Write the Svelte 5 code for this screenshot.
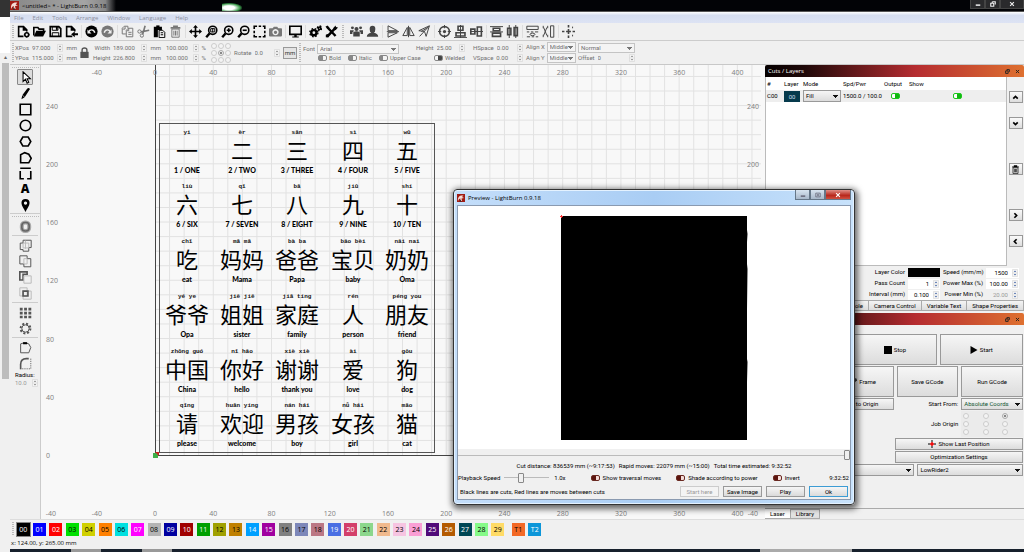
<script lang="ts">
  interface Tool {
    icon: string;
    label: string;
    dim?: boolean;
  }

  const menus = ['File', 'Edit', 'Tools', 'Arrange', 'Window', 'Language', 'Help'];

  // 16x16 glyphs, drawn with currentColor
  const icons: Record<string, string> = {
    newFile: '<path d="M8 14H2V2h6l4 4v2M8 2v4h4" class="s2"/><circle cx="12" cy="12" r="2.4" class="s2"/><path d="M12 8.4v1.4M12 14.2v1.4M8.4 12h1.4M14.2 12h1.4" class="s"/>',
    open: '<path d="M1 13V3h5l1.500 2H13v2.500" class="s2"/><path d="M1 14l3-7h12l-3.500 7z"/>',
    save: '<path d="M1.500 2h10.500l2.500 2.500V14h-13z" class="s2"/><path d="M4 2h7v4.500H4z" class="s"/><path d="M8.500 2h2v4h-2z"/><path d="M4 14V9.500h8V14" class="s"/>',
    importFile: '<path d="M9 14H2V2h6l4 4v2M8 2v4h4" class="s2"/><path d="M16 10v2.500h-4V15l-4.500-3.700L12 8v2z"/>',
    undo: '<circle cx="8" cy="8" r="7.500"/><path d="M4.500 8.500C6 5 11 5 12 9.500" fill="none" stroke="#eee" stroke-width="1.800"/><path d="M3 5.500v5h5z" fill="#eee"/>',
    redo: '<circle cx="8" cy="8" r="7.500"/><path d="M11.500 8.500C10 5 5 5 4 9.500" fill="none" stroke="#eee" stroke-width="1.800"/><path d="M13 5.500v5H8z" fill="#eee"/>',
    copy: '<path d="M6 11H1.500V4L4 1.500h4.500V4M5 2v3H2" class="s"/><path d="M6.500 6.500L9 4h5.500v10.500h-8zM9.500 4v3H7M9 9h4M9 11.500h4" class="s"/>',
    cut: '<circle cx="3" cy="8" r="2" class="s"/><circle cx="6" cy="13" r="2" class="s"/><path d="M5 8.500l10-2M7 11.500L10 1" class="s2"/>',
    paste: '<path d="M1 2h10v4H6v9H1z"/><path d="M4 .500h4v3H4z"/><path d="M7.500 6.500H12L14.500 9v6.500h-7zM9.500 9.500h3M9.500 12h3" class="s"/>',
    trash: '<path d="M2 3.500h12M6 3V1.500h4V3" class="s2"/><path d="M3.500 5h9V15h-9zM6 7v6M8 7v6M10 7v6" class="s"/>',
    move: '<path d="M8 0l3 3.500H9V7h3.500V5L16 8l-3.500 3V9H9v3.500h2L8 16l-3-3.500h2V9H3.500v2L0 8l3.500-3v2H7V3.500H5z"/>',
    zoomFit: '<circle cx="9.500" cy="6.500" r="5" class="s2"/><path d="M7 4.500h5v4H7zM9.500 4v5" class="s"/><path d="M5.500 10.500L1.500 15" class="s3"/>',
    zoomIn: '<circle cx="9.500" cy="6.500" r="5" class="s2"/><path d="M7 6.500h5M9.500 4v5" class="s2"/><path d="M5.500 10.500L1.500 15" class="s3"/>',
    zoomOut: '<circle cx="9.500" cy="6.500" r="5" class="s2"/><path d="M7 6.500h5" class="s2"/><path d="M5.500 10.500L1.500 15" class="s3"/>',
    frame: '<path d="M1.500 5V1.500H5M7 1.500h3M12 1.500h2.500V5M14.500 7v3M14.500 12v2.500H12M10 14.500H7M5 14.500H1.500V12M1.500 10V7" class="s2"/>',
    camera: '<path fill-rule="evenodd" d="M1 4h3.500L6 2h4l1.500 2H15q1 0 1 1v8q0 1-1 1H1q-1 0-1-1V5q0-1 1-1zM8 5a3.800 3.800 0 1 0 .010 0zM8 7a2 2 0 1 1-.010 0z"/>',
    monitor: '<path d="M1 1.500h14v10H1z" class="s2"/><path d="M6.500 12h3v2H12v1.500H4V14h2.500z"/>',
    gears: '<circle cx="6" cy="9.500" r="3.200" class="s3"/><circle cx="6" cy="9.500" r="5" class="gear"/><circle cx="13" cy="4" r="1.600" class="s2"/><circle cx="13" cy="4" r="2.800" class="gear"/>',
    tools: '<path d="M2.500 2.500L13 13.500M3 14L13 3.500" class="s3"/><path d="M.500 2L4 5l1.500-1.500L3 .500zM10 4l3-3.500.500 2L16 3l-3 3.500zM1 12l2-1 2 2-1 2.500-3-.500z"/>',
    people: '<circle cx="8" cy="5" r="2.500"/><circle cx="3" cy="3.500" r="1.800"/><circle cx="13" cy="3.500" r="1.800"/><path d="M4 14V9q4-2.500 8 0v5zM0 11V6.500h4.500V8L3 9v2zM16 11V6.500h-4.500V8L13 9v2z"/>',
    person: '<path d="M8 1q3.500 0 3.500 4T9.500 9.500Q15 10.500 15 14.500H1q0-4 5.500-5Q4.500 9 4.500 5T8 1z"/>',
    mirrorV: '<path d="M2.500 1L14 7H2.500zM2.500 15L14 9.500H2.500z" class="s"/><path d="M1 8.200h15" class="s"/>',
    mirrorH: '<path d="M6.500 3v10H1zM9.500 3v10H15z" class="s"/><path d="M8 1v14" class="s"/>',
    mirrorD: '<path d="M1 7L14 1 10 14M1 7l7 1M14 1L2 14M8 8l2 6M4 8l8-5" class="s"/>',
    target: '<circle cx="8" cy="8" r="6" class="s2"/><circle cx="8" cy="8" r="2"/><path d="M8 0v4M8 12v4M0 8h4M12 8h4" class="s"/>',
    alignV: '<path d="M5 1.500h6v5H5zM2.500 9.500h11v4h-11z" class="s2"/><path d="M8 0v16M0 15.500h16" class="s"/>',
    alignH: '<path d="M1 5h5v6H1zM9 2.500h5v11H9z" class="s2"/><path d="M0 8h16" class="s"/>',
    distV: '<path d="M4 4h8v3H4zM3 10h10v4H3z" class="s2"/><path d="M0 2h16M0 8.500h16" class="s"/>',
    distH: '<path d="M2 4h4v8H2zM10 3h4v10h-4z" class="s2"/><path d="M4 0v16M12 0v16" class="s"/>',
    sameW: '<path d="M1 1.500h14v4H1z" class="s"/><path d="M1 8.500h3M6 8.500h3M11 8.500h4M1 14.500h4M7 14.500h3M12 14.500h3" class="s"/><ellipse cx="8" cy="11.500" rx="3" ry="1.500" class="s"/>',
    sameH: '<path d="M10.500 1h4v14h-4z" class="s"/><path d="M1.500 1v3M1.500 12v3M7 1v3M7 12v3M2 3l4 10M6 3L2 13" class="s"/>',
    center: '<path d="M8 0v3M8 5v6M8 13v3M0 8h3M5 8h6M13 8h3" class="s2"/><path d="M13 2v2M13 12v2" class="s"/>',
    pointer: '<path d="M5 1v12l3-3 2 5 2-1-2-4.500h4z" fill="#fff" stroke="currentColor" stroke-width="1.300"/>',
    pencil: '<path d="M3 15l1-5 6-8q2-1.500 3.500.500L7 12.500zM11 1.500l3 2"/><path d="M4 10l3 2.500" stroke="#fff" stroke-width=".700"/>',
    rect: '<path d="M1.500 1.500h13v13h-13z" class="s2"/>',
    ellipse: '<circle cx="8" cy="8" r="6.500" class="s2"/>',
    hexagon: '<path d="M4.700 2.500h6.600L14.500 8l-3.200 5.500H4.700L1.500 8z" class="s2"/>',
    polygon: '<path d="M2 4.500L7 2l5 2 3 5-3 5.500H2z" class="s2"/>',
    nodes: '<path d="M1.500 1.500h13M1.500 5v9.500H6M14.500 5v9.500H10" class="s2"/>',
    pin: '<path fill-rule="evenodd" d="M8 0a5 5 0 0 1 5 5c0 4-3.500 7-5 11C6.500 12 3 9 3 5a5 5 0 0 1 5-5zM8 3a2 2 0 1 0 .010 0z"/>',
    offset: '<rect x="3.500" y="3" width="9" height="10.500" rx="4" fill="none" stroke="#aaa" stroke-width="5"/><rect x="3.500" y="3" width="9" height="10.500" rx="4" fill="none" stroke="#666" stroke-width="2"/>',
    weld: '<path d="M5 5V1.500h10v9h-3V15H5v-2H1.500V5z" class="s"/><path d="M5 5h7v6H5zM8 2v10" class="ghost"/>',
    union: '<path d="M1 1h9v3.500h4.500v10H6V11H1z" class="s"/><path d="M6 4.500h4V11H6z" class="ghost"/>',
    subtract: '<path d="M1 1h9v3H5v7H1z" class="s2"/><path d="M6 6h9v9H6z" class="ghost"/>',
    intersect: '<path d="M1 1h9v10H1zM5 5h10v10H5z" class="ghost"/><path d="M5 5h6v6H5z" class="s2"/>',
    array: '<path d="M1 2h3.500v3.500H1zM6.300 2h3.500v3.500H6.300zM11.600 2h3.500v3.500h-3.500zM1 7h3.500v3.500H1zM6.300 7h3.500v3.500H6.300zM11.600 7h3.500v3.500h-3.500zM1 12h3.500v3H1zM6.300 12h3.500v3H6.300zM11.600 12h3.500v3h-3.500z"/>',
    circular: '<circle cx="8" cy="8" r="4.500" class="s"/><circle cx="8" cy="8" r="6" fill="none" stroke="currentColor" stroke-width="2.500" stroke-dasharray="2.500 2.200"/>',
    startPoint: '<path d="M2 3.500L7 2l5 1.500L14.500 8 12 14.500H2z" class="s"/><path d="M5 1.500h5v2.500H5z" fill="#000"/>',
    radius: '<path d="M2 15V9q0-7 7-7h3" class="s2"/><path d="M14.500 2v12.500H2" fill="none" stroke="currentColor" stroke-dasharray="1.500 1.200"/>',
    lock: '<path d="M2 7h12v9H2z"/><path d="M4.500 8V4.500q0-3 3.500-3t3.500 3V8" class="s2"/>',
    chevUp: '<path d="M4 10l4-4 4 4" class="s3"/>',
    chevDown: '<path d="M4 6l4 4 4-4" class="s3"/>',
    chevRight: '<path d="M6 4l4 4-4 4" class="s3"/>',
    chevLeft: '<path d="M10 4L6 8l4 4" class="s3"/>',
    stop: '<path d="M0 0h16v16H0z"/>',
    play: '<path d="M1 0l14 8-14 8z"/>',
    cross: '<path d="M0 8h4M12 8h4M8 0v4M8 12v4" class="s2"/><path d="M4 8h8M8 4v8" stroke="#e00" stroke-width="3"/>',
    logo: '<path d="M0 0h16v16H0z" fill="#a01c14"/><path d="M2 14C1 6 5 2 13 3l-3 3 4 2-5 1 1 5H6l1-5-3 1z" fill="#f6dcd6"/><path d="M5 15l2-4 2 4z" fill="#222"/>',
    minimise: '<path d="M2 9h12v4H2z"/>',
    restore: '<path d="M6 2h8v7M6 2v3" class="s3"/><path d="M2 6h8v8H2z" class="s3"/>',
    maximise: '<path d="M2 3h12v10H2zM6 7h4v2H6z" class="s2"/>',
    close: '<path d="M3 3l10 10M13 3L3 13" class="s3"/>'
  };

  const mainTools: Tool[][] = [
    [
      { icon: 'newFile', label: 'New' },
      { icon: 'open', label: 'Open' },
      { icon: 'save', label: 'Save' },
      { icon: 'importFile', label: 'Import' }
    ],
    [
      { icon: 'undo', label: 'Undo' },
      { icon: 'redo', label: 'Redo', dim: true }
    ],
    [
      { icon: 'copy', label: 'Copy', dim: true },
      { icon: 'cut', label: 'Cut', dim: true },
      { icon: 'paste', label: 'Paste' },
      { icon: 'trash', label: 'Delete', dim: true }
    ],
    [
      { icon: 'move', label: 'Pan' },
      { icon: 'zoomFit', label: 'Zoom to page' },
      { icon: 'zoomIn', label: 'Zoom in' },
      { icon: 'zoomOut', label: 'Zoom out' },
      { icon: 'frame', label: 'Frame selection' },
      { icon: 'camera', label: 'Camera', dim: true }
    ],
    [{ icon: 'monitor', label: 'Preview' }],
    [
      { icon: 'gears', label: 'Settings' },
      { icon: 'tools', label: 'Device settings' }
    ]
  ];

  const arrangeTools: Tool[][] = [
    [
      { icon: 'people', label: 'Group' },
      { icon: 'person', label: 'Ungroup' }
    ],
    [
      { icon: 'mirrorV', label: 'Flip vertical' },
      { icon: 'mirrorH', label: 'Flip horizontal' },
      { icon: 'mirrorD', label: 'Mirror across line' }
    ],
    [
      { icon: 'target', label: 'Align centers' },
      { icon: 'alignV', label: 'Align vertical' },
      { icon: 'alignH', label: 'Align horizontal' }
    ],
    [
      { icon: 'distV', label: 'Distribute vertical' },
      { icon: 'distH', label: 'Distribute horizontal' }
    ],
    [
      { icon: 'sameW', label: 'Same width' },
      { icon: 'sameH', label: 'Same height' }
    ],
    [{ icon: 'center', label: 'Move to center' }]
  ];

  const drawTools: Tool[] = [
    { icon: 'pointer', label: 'Select' },
    { icon: 'pencil', label: 'Draw lines' },
    { icon: 'rect', label: 'Rectangle' },
    { icon: 'ellipse', label: 'Ellipse' },
    { icon: 'hexagon', label: 'Polygon' },
    { icon: 'polygon', label: 'Edit nodes' },
    { icon: 'nodes', label: 'Tabs' },
    { icon: 'text', label: 'Text' },
    { icon: 'pin', label: 'Position laser' }
  ];

  const shapeTools: Tool[][] = [
    [{ icon: 'offset', label: 'Offset' }],
    [
      { icon: 'weld', label: 'Weld' },
      { icon: 'union', label: 'Union' },
      { icon: 'subtract', label: 'Subtract' },
      { icon: 'intersect', label: 'Intersect' }
    ],
    [
      { icon: 'array', label: 'Grid array' },
      { icon: 'circular', label: 'Circular array' }
    ],
    [
      { icon: 'startPoint', label: 'Start point' },
      { icon: 'radius', label: 'Radius' }
    ]
  ];

  // Workspace is in millimetres, zoomed to pixels
  const scale = 1.456;
  const originX = 114;
  const originY = 390;
  const gridX = Array.from({ length: 41 }, (_, i) => originX + (i + 1) * 10 * scale);
  const gridY = Array.from({ length: 26 }, (_, i) => originY - (i + 1) * 10 * scale);
  const xTicks = [-40, 0, 40, 80, 120, 160, 200, 240, 280, 320, 360, 400];
  const yTicks = [240, 200, 160, 120, 80, 40, 0];

  const colX = [146, 201, 256, 312, 366];
  const rowY = [69, 123, 178, 233, 288, 342];
  const words = [
    [['yi', '一', '1 / ONE'], ['èr', '二', '2 / TWO'], ['sān', '三', '3 / THREE'], ['sì', '四', '4 / FOUR'], ['wǔ', '五', '5 / FIVE']],
    [['liù', '六', '6 / SIX'], ['qī', '七', '7 / SEVEN'], ['bā', '八', '8 / EIGHT'], ['jiǔ', '九', '9 / NINE'], ['shí', '十', '10 / TEN']],
    [['chī', '吃', 'eat'], ['mā mā', '妈妈', 'Mama'], ['bà ba', '爸爸', 'Papa'], ['bǎo bèi', '宝贝', 'baby'], ['nǎi nai', '奶奶', 'Oma']],
    [['yé ye', '爷爷', 'Opa'], ['jiě jiě', '姐姐', 'sister'], ['jiā tíng', '家庭', 'family'], ['rén', '人', 'person'], ['péng you', '朋友', 'friend']],
    [['zhōng guó', '中国', 'China'], ['nǐ hǎo', '你好', 'hello'], ['xiè xiè', '谢谢', 'thank you'], ['ài', '爱', 'love'], ['gǒu', '狗', 'dog']],
    [['qǐng', '请', 'please'], ['huān yíng', '欢迎', 'welcome'], ['nán hái', '男孩', 'boy'], ['nǚ hái', '女孩', 'girl'], ['māo', '猫', 'cat']]
  ];

  const swatches = [
    ['#000000', '#fff'], ['#0000ff', '#fff'], ['#ff0000', '#fff'], ['#00e000', '#000'], ['#d0d000', '#000'],
    ['#ff8000', '#000'], ['#00e0e0', '#000'], ['#ff00ff', '#fff'], ['#b4b4b4', '#000'], ['#0000a0', '#fff'],
    ['#a00000', '#fff'], ['#00a000', '#fff'], ['#a0a000', '#000'], ['#c08000', '#000'], ['#00a0ff', '#fff'],
    ['#a000a0', '#fff'], ['#808080', '#000'], ['#7d87b9', '#000'], ['#bb7784', '#000'], ['#4a6fe3', '#fff'],
    ['#d33f6a', '#fff'], ['#8cd78c', '#000'], ['#f0b98d', '#000'], ['#f6c4e1', '#000'], ['#fa9ed4', '#000'],
    ['#500a78', '#fff'], ['#b45a00', '#fff'], ['#004754', '#fff'], ['#86fa88', '#000'], ['#ffdb66', '#000']
  ];

  let activeLayer = $state(0);
  let activeTool = $state('pointer');
  let origin = $state(2);
  let speed = $state(35);
  let progress = $state(100);
</script>

{#snippet icon(name: string)}
  <svg class="icon" viewBox="0 0 16 16" aria-hidden="true">{@html icons[name]}</svg>
{/snippet}

{#snippet spin()}
  <svg class="spin" viewBox="0 0 6 8" aria-hidden="true">
    <path d="M.5.5h5v7h-5zM0 4h6" fill="#f4f4f4" stroke="#d4d4d4" stroke-width=".6" />
    <path d="M1.800 3L3 1.500 4.200 3zM1.800 5L3 6.500 4.200 5z" fill="currentColor" />
  </svg>
{/snippet}

{#snippet toolGroups(groups: Tool[][])}
  {#each groups as group, g}
    {#if g > 0}<span class="sep"></span>{/if}
    {#each group as tool}
      <button class="tool" class:dim={tool.dim} aria-label={tool.label}>{@render icon(tool.icon)}</button>
    {/each}
  {/each}
{/snippet}

{#snippet field(label: string, value: string)}
  <label class="field">{#if label}<span>{label}</span>{/if}<input type="text" {value} />{@render spin()}</label>
{/snippet}

<div class="desktop">
  <div class="behind">
    <div class="behind-title"></div>
    <div class="behind-page"></div>
    <div class="behind-arrow">▴</div>
    <div class="behind-thumb"></div>
  </div>

  <div class="app">
    <header class="titlebar">
      <span class="title">{@render icon('logo')}&lt;untitled&gt; * - LightBurn 0.9.18</span>
      <span class="glow"></span>
      <div class="caption">
        <button aria-label="Minimize">{@render icon('minimise')}</button>
        <button aria-label="Restore">{@render icon('restore')}</button>
        <button class="wide" aria-label="Close">{@render icon('close')}</button>
      </div>
    </header>

    <nav class="menubar">
      {#each menus as menu}
        <button>{menu}</button>
      {/each}
    </nav>

    <div class="toolbar">
      <span class="handle"></span>
      {@render toolGroups(mainTools)}
      <span class="handle second"></span>
      <div class="arrange">{@render toolGroups(arrangeTools)}</div>
    </div>

    <div class="props">
      <span class="handle"></span>
      <div class="pair pos">
        {@render field('XPos', '97.000')}<span>mm</span>
        {@render field('YPos', '115.000')}<span>mm</span>
      </div>
      <button class="lock" aria-label="Lock aspect ratio">{@render icon('lock')}</button>
      <div class="pair size">
        {@render field('Width', '189.000')}<span>mm</span>
        {@render field('Height', '226.800')}<span>mm</span>
      </div>
      <div class="pair percent">
        {@render field('', '100.000')}<span>%</span>
        {@render field('', '100.000')}<span>%</span>
      </div>
      <div class="anchor">
        {#each Array(9) as _, i}
          <input type="radio" name="anchor" aria-label="Anchor {i + 1}" checked={i === 4} />
        {/each}
      </div>
      <div class="rotate">{@render field('Rotate', '0.0')}</div>
      <button class="unit">mm</button>
      <span class="handle second"></span>
      <div class="font">
        <label class="fontname">Font <select><option>Arial</option></select></label>
        <div class="checks">
          <label><input type="checkbox" class="toggle" />Bold</label>
          <label><input type="checkbox" class="toggle" />Italic</label>
          <label><input type="checkbox" class="toggle" />Upper Case</label>
        </div>
      </div>
      <div class="stack height">
        {@render field('Height', '25.00')}
        <label class="welded"><input type="checkbox" class="toggle" checked />Welded</label>
      </div>
      <div class="stack space">
        {@render field('HSpace', '0.00')}
        {@render field('VSpace', '0.00')}
      </div>
      <div class="stack align">
        <label>Align X <select><option>Middle</option></select></label>
        <label>Align Y <select><option>Middle</option></select></label>
      </div>
      <div class="stack style">
        <select aria-label="Text style"><option>Normal</option></select>
        {@render field('Offset', '0')}
      </div>
    </div>

    <main class="workspace">
      <aside class="tools">
        <span class="hhandle"></span>
        {#each drawTools as tool}
          <button
            class="tool"
            class:active={activeTool === tool.icon}
            aria-label={tool.label}
            onclick={() => { activeTool = tool.icon; }}
          >
            {#if tool.icon === 'text'}<b>A</b>{:else}{@render icon(tool.icon)}{/if}
          </button>
        {/each}
        <span class="hline full"></span>
        <span class="hhandle"></span>
        {#each shapeTools as group, g}
          {#if g > 0}<span class="hline"></span>{/if}
          {#each group as tool}
            <button class="tool grey" aria-label={tool.label}>{@render icon(tool.icon)}</button>
          {/each}
        {/each}
        <label class="radius">Radius:
          <span><input type="text" value="10.0" />{@render spin()}</span>
        </label>
      </aside>

      <svg class="canvas" role="img" aria-label="Workspace">
        <g class="grid">
          {#each gridX as x}<line x1={x} x2={x} y1="0" y2={originY} />{/each}
          {#each gridY as y}<line x1={originX} x2="720" y1={y} y2={y} />{/each}
        </g>
        <path class="axis" d="M114.500 0V390.500H722" />
        <rect class="page" x="118.500" y="58.500" width="275" height="329" />
        <g class="ticks">
          {#each xTicks as t}
            <text x={originX + t * scale} y="10">{t}</text>
            <text x={originX + t * scale} y="451">{t}</text>
          {/each}
          {#each yTicks as t}
            <text class="left" x="5" y={originY - t * scale + 3}>{t}</text>
            <text x="712" y={originY - t * scale + 3}>{t}</text>
          {/each}
          <text x="10" y="451">-40</text>
          <text x="712" y="451">-40</text>
        </g>
        {#each words as row, r}
          {#each row as [pinyin, hanzi, english], c}
            <text class="pinyin" x={colX[c]} y={rowY[r]}>{pinyin}</text>
            <text class="hanzi" x={colX[c]} y={rowY[r] + 25}>{hanzi}</text>
            <text class="english" x={colX[c]} y={rowY[r] + 39}>{english}</text>
          {/each}
        {/each}
        <rect x="112" y="388" width="5" height="5" fill="#3fae49" />
        <path d="M114 387h4v4z" fill="#c22" />
      </svg>

      <aside class="dock">
        <h2 class="dock-title">Cuts / Layers <span>{@render icon('restore')}{@render icon('close')}</span></h2>
        <div class="layers">
          <div class="list">
            <table>
              <thead>
                <tr><th class="c-num">#</th><th class="c-layer">Layer</th><th class="c-mode">Mode</th><th class="c-spd">Spd/Pwr</th><th class="c-out">Output</th><th>Show</th></tr>
              </thead>
              <tbody>
                <tr>
                  <td>C00</td>
                  <td><span class="chip">00</span></td>
                  <td><select class="raised" aria-label="Mode"><option>Fill</option></select></td>
                  <td>1500.0 / 100.0</td>
                  <td class="mid"><input type="checkbox" class="toggle green" aria-label="Output" checked /></td>
                  <td class="mid"><input type="checkbox" class="toggle green" aria-label="Show" checked /></td>
                </tr>
              </tbody>
            </table>
          </div>
          <div class="order">
            <button aria-label="Move up">{@render icon('chevUp')}</button>
            <button aria-label="Move down">{@render icon('chevDown')}</button>
            <button class="gap" aria-label="Delete layer">{@render icon('trash')}</button>
            <button class="gap" aria-label="Next">{@render icon('chevRight')}</button>
            <button aria-label="Previous">{@render icon('chevLeft')}</button>
          </div>
        </div>

        <div class="params">
          <span>Layer Color</span><button class="color" aria-label="Layer color"></button>
          <label for="speed">Speed (mm/m)</label><span class="num"><input id="speed" value="1500" />{@render spin()}</span>
          <label for="passes">Pass Count</label><span class="num"><input id="passes" value="1" />{@render spin()}</span>
          <label for="pmax">Power Max (%)</label><span class="num"><input id="pmax" value="100.00" />{@render spin()}</span>
          <label for="interval">Interval (mm)</label><span class="num"><input id="interval" value="0.100" />{@render spin()}</span>
          <label for="pmin">Power Min (%)</label><span class="num off"><input id="pmin" value="20.00" />{@render spin()}</span>
        </div>

        <div class="tabs">
          <button>Cuts</button><button>Move</button><button>Console</button><button>Camera Control</button><button>Variable Text</button><button>Shape Properties</button>
        </div>

        <h2 class="dock-title">Laser <span>{@render icon('restore')}{@render icon('close')}</span></h2>
        <div class="laser">
          <div class="three big">
            <button>Pause</button>
            <button>{@render icon('stop')}Stop</button>
            <button>{@render icon('play')}Start</button>
          </div>
          <div class="four big">
            <button>Frame</button>
            <button>{@render icon('gears')}Frame</button>
            <button>Save GCode</button>
            <button>Run GCode</button>
          </div>
          <div class="four">
            <button>Home</button>
            <button>Go to Origin</button>
            <label class="right" for="from">Start From:</label>
            <select id="from" class="raised from"><option>Absolute Coords</option></select>
          </div>
          <div class="four">
            <span class="right job">Job Origin</span>
            <div class="radios">
              {#each Array(9) as _, i}
                <input type="radio" aria-label="Job origin {i + 1}" value={i} bind:group={origin} />
              {/each}
            </div>
          </div>
          <button class="half">{@render icon('cross')}Show Last Position</button>
          <button class="half">Optimization Settings</button>
          <div class="device">
            <select class="raised" aria-label="Port"><option>(Auto)</option></select>
            <select class="raised" aria-label="Device"><option>LowRider2</option></select>
          </div>
        </div>
        <div class="tabs bottom"><button class="on">Laser</button><button>Library</button></div>
      </aside>
    </main>

    <div class="palette">
      <span class="handle"></span>
      <div class="swatches">
        {#each swatches as [bg, fg], i}
          <button
            class:picked={activeLayer === i}
            style="background: {bg}; color: {fg};"
            onclick={() => { activeLayer = i; }}
          >{String(i).padStart(2, '0')}</button>
        {/each}
      </div>
      <div class="swatches tooling">
        <button style="background: #f36926; color: #000;">T1</button>
        <button style="background: #0c96d9; color: #fff;">T2</button>
      </div>
    </div>
    <footer class="status">x: 124.00, y: 265.00 mm</footer>
    <div class="taskbar"></div>
  </div>

  <div class="dialog" role="dialog" aria-label="Preview">
    <div class="dialog-title">
      <span>{@render icon('logo')}Preview - LightBurn 0.9.18</span>
      <div class="dialog-caption">
        <button aria-label="Minimize preview">{@render icon('minimise')}</button>
        <button aria-label="Maximize preview">{@render icon('maximise')}</button>
        <button class="red" aria-label="Close preview">{@render icon('close')}</button>
      </div>
    </div>
    <div class="client">
      <div class="preview">
        <svg viewBox="0 0 187 224" aria-hidden="true">
          <path d="M0 0h186v14l.500 4-.500 8v22l.500 5-.500 40v50l.500 3-.500 20v58H0z" />
          <path d="M-1 .500h3M.500-1v3" stroke="#f33" />
        </svg>
      </div>
      <input type="range" class="seek" aria-label="Playback position" bind:value={progress} />
      <p class="stats">
        <span>Cut distance: 836539 mm (~9:17:53)</span><span>Rapid moves: 22079 mm (~15:00)</span><span>Total time estimated: 9:32:52</span>
      </p>
      <div class="playback">
        <label class="rate">Playback Speed <input type="range" bind:value={speed} /></label>
        <span class="times">1.0x</span>
        <label><input type="checkbox" class="toggle dark" />Show traversal moves</label>
        <label><input type="checkbox" class="toggle dark" />Shade according to power</label>
        <label><input type="checkbox" class="toggle dark" />Invert</label>
        <span class="clock">9:32:52</span>
      </div>
      <div class="actions">
        <span>Black lines are cuts, Red lines are moves between cuts</span>
        <button disabled>Start here</button>
        <button>Save Image</button>
        <button>Play</button>
        <button class="default">Ok</button>
      </div>
    </div>
  </div>
</div>

<style>
  :global(body) {
    background: #f0f0f0;
  }

  .desktop {
    position: relative;
    display: flex;
    min-height: 100vh;
    overflow: hidden;
    font: 6px/8px Roboto, "Open Sans", sans-serif;
    color: #000;
  }

  .desktop * {
    box-sizing: border-box;
  }

  button, input, select {
    font: inherit;
    color: inherit;
    margin: 0;
    padding: 0;
    border: 0;
    background: none;
    min-width: 0;
  }

  select {
    appearance: none;
    height: 10px;
    padding: 0 2px;
    border: 1px solid #c4c4c4;
    background: linear-gradient(#777, #777) no-repeat right 2px top 3px / 5px 1px,
      linear-gradient(#777, #777) no-repeat right 3px top 4px / 3px 1px,
      linear-gradient(#777, #777) no-repeat right 4px top 5px / 1px 1px, #f4f4f4;
  }

  select.raised {
    height: 12px;
    border-color: #999;
    background: linear-gradient(#111, #111) no-repeat right 2px top 4px / 5px 1px,
      linear-gradient(#111, #111) no-repeat right 3px top 5px / 3px 1px,
      linear-gradient(#111, #111) no-repeat right 4px top 6px / 1px 1px, linear-gradient(#f6f6f6, #dcdcdc);
  }

  input[type='radio'] {
    appearance: none;
    width: 6px;
    height: 6px;
    border: 1px solid #ccc;
    border-radius: 50%;
    background: #f4f4f4;
  }

  input[type='radio']:checked {
    border-color: #aaa;
    background: radial-gradient(#888 35%, #eee 45%);
  }

  .toggle {
    appearance: none;
    width: 9px;
    height: 6px;
    flex: none;
    border: 1px solid #888;
    border-radius: 2px;
    background: linear-gradient(90deg, #888 50%, #f4f4f4 50%);
  }

  .toggle:checked {
    background: linear-gradient(90deg, #f4f4f4 50%, #444 50%);
  }

  .toggle.dark {
    border-color: #6a2a22;
    background: linear-gradient(90deg, #5c140e 60%, #f4dcd8 60%);
  }

  .toggle.green {
    border-color: #1ec81e;
    background: linear-gradient(90deg, #fff 45%, #10b810 45%);
  }

  .icon {
    display: block;
    width: 13px;
    height: 13px;
    fill: currentColor;
    flex: none;
  }

  .icon :global(.s),
  .icon :global(.s2),
  .icon :global(.s3),
  .icon :global(.ghost),
  .icon :global(.gear) {
    fill: none;
    stroke: currentColor;
    stroke-width: 1.2;
  }

  .icon :global(.s2) { stroke-width: 2; }
  .icon :global(.s3) { stroke-width: 3; }
  .icon :global(.ghost) { stroke: #bbb; }
  .icon :global(.gear) { stroke-width: 1.6; stroke-dasharray: 2 2; }

  .spin {
    width: 6px;
    height: 8px;
    flex: none;
    color: #888;
  }

  /* window peeking out on the left */
  .behind {
    width: 10px;
    flex: none;
    background: #f0f0f0;
  }

  .behind-title { height: 17px; background: #333; }
  .behind-page { height: 36px; background: #fff; }
  .behind-arrow { height: 10px; color: #666; text-align: center; }
  .behind-thumb { height: 316px; margin: 0 1px 0 2px; background: #bdbdbd; }

  .app {
    flex: 1;
    min-width: 0;
    display: flex;
    flex-direction: column;
    background: #f0f0f0;
  }

  .titlebar {
    display: flex;
    height: 12px;
    background: #020306;
    border-bottom: 1px solid #555;
  }

  .title {
    display: flex;
    align-items: center;
    gap: 3px;
    width: 106px;
    font-family: "Open Sans", sans-serif;
    color: #000;
    background: linear-gradient(90deg, #888, #a4a4a4 70%, #888 90%, #020306);
    white-space: nowrap;
  }

  .title .icon { width: 9px; height: 9px; }

  .glow {
    width: 20px;
    height: 8px;
    margin: 3px 0 0 106px;
    background: radial-gradient(ellipse at 35% 60%, #fff 30%, #3a9a4a 60%, transparent 75%);
  }

  .caption {
    display: flex;
    height: 9px;
    margin-left: auto;
  }

  .caption button {
    display: grid;
    place-items: center;
    width: 15px;
    color: #eee;
    background: #2a2a2c;
    border: 1px solid #444;
    border-top: 0;
  }

  .caption .wide { width: 24px; }
  .caption .icon { width: 6px; height: 6px; }

  .menubar {
    display: flex;
    gap: 9px;
    height: 11px;
    padding-left: 4px;
    background: linear-gradient(#fff, #d6def0 30%, #dde3f4);
    font-family: "Open Sans", sans-serif;
    color: #8c90a0;
  }

  .toolbar {
    display: flex;
    align-items: center;
    height: 18px;
    padding-left: 2px;
    border-bottom: 1px solid #ccc;
  }

  .handle {
    width: 3px;
    height: 14px;
    flex: none;
    background: repeating-linear-gradient(#bbb 0 1px, transparent 1px 2px);
    background-size: 2px 100%;
    background-repeat: no-repeat;
  }

  .handle.second { margin: 0 3px; }

  .arrange {
    display: flex;
    align-items: center;
    color: #444;
  }

  .tool {
    display: grid;
    place-items: center;
    width: 16px;
    height: 16px;
    flex: none;
    color: #000;
  }

  .arrange .tool { color: #444; }
  .tool.dim { color: #777; }

  .sep {
    width: 1px;
    height: 13px;
    margin: 0 1px 0 2px;
    background: #ddd;
  }

  .props {
    display: flex;
    align-items: center;
    height: 24px;
    padding-left: 2px;
    border-bottom: 1px solid #c8c8c8;
    color: #707070;
    white-space: nowrap;
  }

  .props .handle { height: 20px; }
  .props .handle.second { margin: 0 0 0 2px; }

  .field {
    display: flex;
    align-items: center;
    gap: 3px;
  }

  .field input { flex: 1; width: 0; }

  .pair {
    display: grid;
    grid-template-columns: 1fr auto;
    gap: 2px 3px;
    flex: none;
  }

  .pos { width: 62px; }
  .size { width: 68px; margin-left: 2px; }
  .size .field span { width: 17px; text-align: right; }
  .percent { width: 40px; margin-left: 5px; }

  .lock {
    width: 14px;
    flex: none;
    padding-left: 2px;
    color: #555;
  }

  .lock .icon { width: 11px; }

  .anchor {
    display: grid;
    grid-template-columns: repeat(3, 6px);
    gap: 1px;
    width: 21px;
    flex: none;
    margin-left: 5px;
  }

  .rotate { width: 46px; flex: none; margin-left: 2px; }

  .unit {
    width: 14px;
    height: 12px;
    flex: none;
    margin-left: 3px;
    border: 1px solid #999;
    color: #333;
    background: #e4e4e4;
  }

  .font { width: 96px; flex: none; margin-left: 1px; }

  .fontname select { flex: 1; }

  .checks {
    display: flex;
    gap: 7px;
    padding-left: 15px;
  }

  .props label:not(.field) {
    display: flex;
    align-items: center;
    gap: 2px;
  }

  .stack {
    display: grid;
    gap: 2px;
    flex: none;
  }

  .height { width: 49px; margin-left: 17px; }
  .props .welded { padding-left: 18px; }
  .space { width: 50px; margin-left: 8px; }
  .align { width: 50px; margin-left: 3px; gap: 1px; }
  .align select { flex: 1; }
  .style { width: 57px; margin-left: 2px; gap: 1px; }

  .workspace {
    flex: 1;
    display: grid;
    grid-template-columns: 31px 1fr 259px;
  }

  .tools {
    display: flex;
    flex-direction: column;
    align-items: center;
    border-right: 1px solid #ccc;
  }

  .hhandle {
    height: 1px;
    width: 27px;
    margin: 2px 0 1px;
    background: repeating-linear-gradient(90deg, #bbb 0 1px, transparent 1px 2px);
  }

  .tools .tool b { font: 900 12px/14px "Open Sans", sans-serif; }
  .tools .grey { color: #555; }

  .tool.active {
    background: #ddd;
    border: 1px solid #888;
    border-radius: 1px;
  }

  .hline {
    width: 26px;
    height: 1px;
    margin: 1px 0;
    background: #ccc;
  }

  .hline.full { width: 100%; margin: 0; }

  .radius {
    display: block;
    padding-left: 3px;
  }

  .radius span { display: flex; align-items: center; color: #999; }
  .radius input { width: 17px; }

  .canvas {
    width: 100%;
    height: 100%;
    background: #f8f8f8;
    text-anchor: middle;
  }

  .grid line { stroke: #e2e2e2; }
  .axis { fill: none; stroke: #444; }
  .page { fill: none; stroke: #555; }

  .ticks text {
    font: 7px "Open Sans", sans-serif;
    fill: #808080;
  }

  .ticks .left { text-anchor: start; }
  .pinyin { font: bold 6px "Liberation Mono", monospace; fill: #111; }
  .hanzi { font: 22px "Liberation Sans", "Noto Sans CJK SC", sans-serif; fill: #000; }
  .english { font: 900 7px Lato, sans-serif; fill: #000; }

  .dock {
    display: flex;
    flex-direction: column;
    min-width: 0;
  }

  .dock-title {
    display: flex;
    justify-content: space-between;
    align-items: center;
    height: 12px;
    flex: none;
    margin: 0;
    padding: 0 4px 0 3px;
    border-radius: 2px 2px 0 0;
    background: linear-gradient(90deg, #050000, #1e0808 15%, #b52c30 58%, #de7030);
    color: #fff;
    font: inherit;
    font-family: "Open Sans", sans-serif;
  }

  .dock-title span { display: flex; gap: 5px; color: #222; }
  .dock-title .icon { width: 5px; height: 5px; }

  .layers {
    display: flex;
    height: 189px;
  }

  .list {
    flex: 1;
    border: 1px solid #bbb;
    border-top: 0;
    background: #fff;
  }

  table {
    width: 100%;
    table-layout: fixed;
    border-collapse: collapse;
    white-space: nowrap;
  }

  th, td {
    padding: 0 1px;
    text-align: left;
    font-weight: normal;
  }

  th { height: 13px; }
  td { height: 12px; background: #eee; }
  td.mid { text-align: center; }
  td.mid .toggle { display: block; margin: 0 auto; }
  .c-num { width: 17px; }
  .c-layer { width: 19px; }
  .c-mode { width: 40px; }
  .c-spd { width: 41px; }
  .c-out { width: 25px; }

  td select { width: 38px; display: block; }

  .chip {
    display: block;
    width: 16px;
    height: 11px;
    line-height: 11px;
    text-align: center;
    color: #cde;
    background: #063a4c;
  }

  .order {
    display: flex;
    flex-direction: column;
    align-items: center;
    gap: 14px;
    width: 17px;
    padding-top: 14px;
  }

  .order button {
    display: grid;
    place-items: center;
    width: 14px;
    height: 12px;
    border: 1px solid #999;
    background: linear-gradient(#fafafa, #ddd);
  }

  .order .icon { width: 9px; height: 9px; }
  .order .gap { margin-top: 20px; }

  .params {
    display: grid;
    grid-template-columns: 1fr 32px 40px 33px;
    column-gap: 3px;
    row-gap: 1px;
    padding: 2px 5px 0 0;
    text-align: right;
    white-space: nowrap;
  }

  .color { height: 9px; background: #000; }

  .num {
    display: flex;
    align-items: center;
    height: 10px;
    background: #fff;
  }

  .num input { flex: 1; width: 0; padding-right: 3px; text-align: right; }
  .num .spin { width: 8px; color: #4a6aa8; }
  .num.off { color: #999; background: #f0f0f0; }

  .tabs {
    display: flex;
    height: 11px;
    margin-bottom: 2px;
    justify-content: flex-end;
  }

  .tabs button {
    padding: 0 5px;
    border: 1px solid #aaa;
    border-left: 0;
    background: linear-gradient(#f4f4f4, #ddd);
    white-space: nowrap;
  }

  .tabs.bottom {
    justify-content: flex-start;
    margin: auto 0 0;
    border-top: 1px solid #aaa;
  }

  .tabs.bottom .on { background: #fff; border-top: 0; }

  .laser {
    display: grid;
    gap: 1px;
    padding: 9px 1px 0 2px;
    white-space: nowrap;
  }

  .laser button {
    display: flex;
    align-items: center;
    justify-content: center;
    gap: 2px;
    height: 12px;
    border: 1px solid #999;
    background: linear-gradient(#f6f6f6, #dcdcdc);
  }

  .laser .icon { width: 8px; height: 8px; }
  .laser .big button { height: 31px; }

  .three {
    display: grid;
    grid-template-columns: repeat(3, 1fr);
    gap: 3px;
  }

  .four {
    display: grid;
    grid-template-columns: repeat(4, 1fr);
    gap: 3px;
    align-items: center;
  }

  .right { text-align: right; }
  .from { color: #153; }
  .job { grid-column: 3; }

  .radios {
    display: grid;
    grid-template-columns: repeat(3, 1fr);
    gap: 2px 0;
    padding: 2px;
    background: #ebebeb;
  }

  .half { margin-left: 50%; }

  .device {
    display: grid;
    grid-template-columns: 148fr 106fr;
    gap: 3px;
  }

  .palette {
    display: flex;
    align-items: center;
    height: 19px;
    padding-left: 2px;
    border-top: 1px solid #ddd;
  }

  .swatches {
    display: grid;
    grid-template-columns: repeat(30, 1fr);
    width: 491px;
    justify-items: center;
    align-items: center;
  }

  .swatches.tooling {
    grid-template-columns: 1fr 1fr;
    width: 33px;
    margin-left: 4px;
  }

  .swatches button {
    width: 13px;
    height: 13px;
    font: 7px/13px "Open Sans", sans-serif;
    text-align: center;
  }

  .swatches .picked { outline: 1px solid #888; }

  .status {
    height: 11px;
    padding: 1px;
    font-family: "Open Sans", sans-serif;
    white-space: nowrap;
  }

  .taskbar {
    height: 3px;
    background: linear-gradient(90deg, #17202c 6%, #999 6% 9%, #17202c 9% 13%, #999 13% 16%, #17202c 16% 74%, #aaa 74% 83%, #17202c 83%);
  }

  .dialog {
    position: absolute;
    left: 453px;
    top: 189px;
    width: 402px;
    padding: 0 3px 4px;
    border: 1px solid #333;
    border-radius: 4px;
    background: linear-gradient(90deg, #c4defa, #a9cdf4 50%, #c8e2fb);
    box-shadow: 1px 2px 6px 2px rgba(0, 0, 0, 0.6), inset 0 0 0 1px #e4f2ff;
    white-space: nowrap;
  }

  .dialog-title {
    display: flex;
    justify-content: space-between;
    height: 15px;
    font-family: "Open Sans", sans-serif;
  }

  .dialog-title > span {
    display: flex;
    align-items: center;
    gap: 3px;
  }

  .dialog-title .icon { width: 8px; height: 8px; }

  .dialog-caption { display: flex; height: 10px; }

  .dialog-caption button {
    display: grid;
    place-items: center;
    width: 15px;
    border: 1px solid #678;
    border-top: 0;
    color: #667;
    background: linear-gradient(#d8e4f0, #a8b8ca);
  }

  .dialog-caption .icon { width: 6px; height: 6px; }

  .dialog-caption .red {
    width: 26px;
    color: #fff;
    background: linear-gradient(#e09088, #b8281c 60%, #d05040);
  }

  .client {
    border: 1px solid #8a9ab0;
    background: #f0f0f0;
  }

  .preview {
    display: flex;
    justify-content: center;
    padding: 10px 0 9px;
    background: #fff;
  }

  .preview svg { width: 187px; height: 224px; overflow: visible; }

  input[type='range'] {
    appearance: none;
    background: linear-gradient(#bbb, #bbb) no-repeat center / 100% 1px;
  }

  input[type='range']::-webkit-slider-thumb {
    appearance: none;
    width: 6px;
    height: 10px;
    border: 1px solid #888;
    border-radius: 1px;
    background: #f0f0f0;
  }

  .seek {
    display: block;
    width: 100%;
    height: 12px;
  }

  .stats {
    display: flex;
    justify-content: center;
    gap: 4px;
    margin: 1px 0;
  }

  .playback {
    display: flex;
    align-items: center;
    height: 13px;
  }

  .playback label {
    display: flex;
    align-items: center;
    gap: 3px;
    margin-right: 15px;
  }

  .playback .rate { gap: 4px; margin-right: 5px; }
  .rate input { width: 45px; height: 10px; }
  .times { margin-right: 25px; }
  .clock { margin: 0 1px 0 auto; }

  .actions {
    display: flex;
    align-items: center;
    gap: 4px;
    padding: 2px 2px 2px;
  }

  .actions span { margin-right: auto; }

  .actions button {
    width: 39px;
    height: 11px;
    border: 1px solid #999;
    background: linear-gradient(#f6f6f6, #dadada);
  }

  .actions button:disabled { color: #999; border-color: #ccc; background: #f4f4f4; }
  .actions .default { border-color: #3c9cd4; }
</style>
